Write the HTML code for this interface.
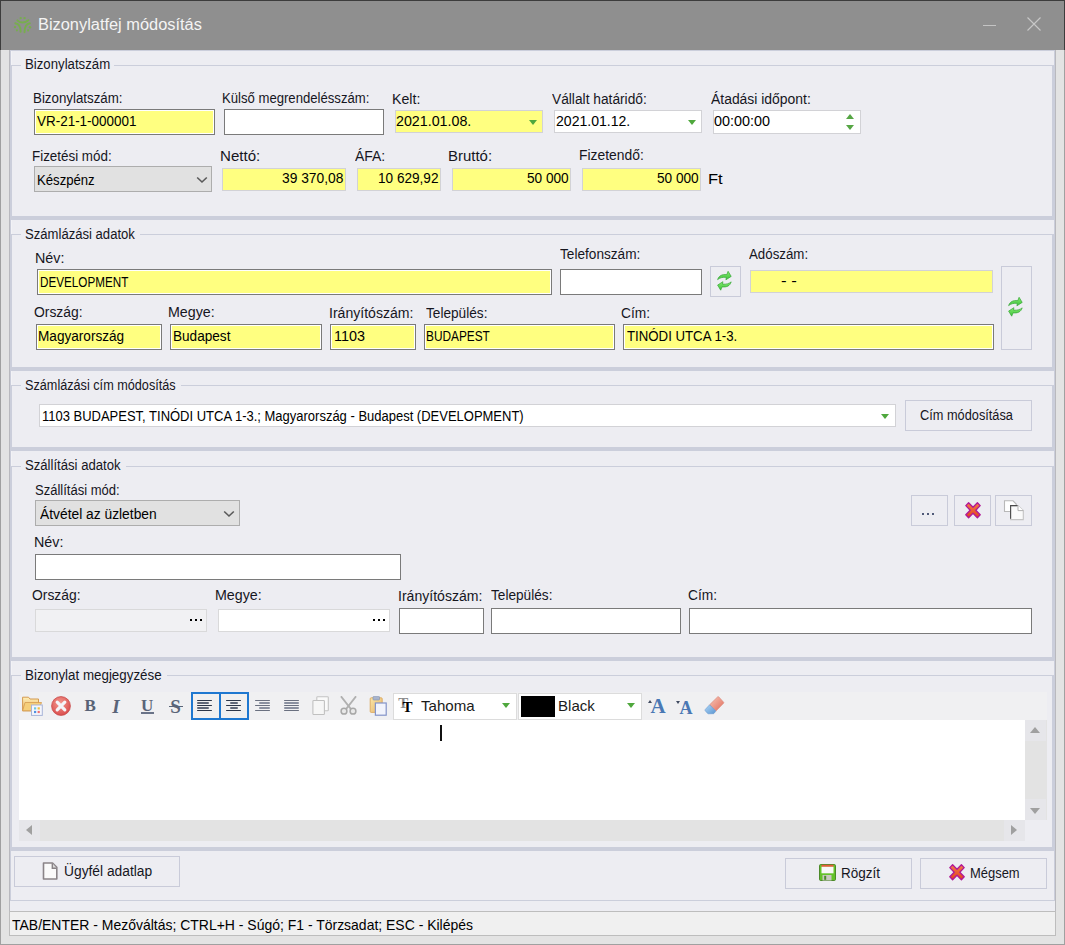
<!DOCTYPE html><html><head><meta charset="utf-8"><style>
html,body{margin:0;padding:0;}
body{width:1065px;height:945px;position:relative;overflow:hidden;background:#e3e3e3;font-family:"Liberation Sans",sans-serif;}
.t{position:absolute;white-space:nowrap;}
.b{position:absolute;box-sizing:border-box;}
</style></head><body>
<div class="b" style="left:0px;top:0px;width:1065px;height:945px;background:#e3e3e3;border:1px solid #a0a0a0;"></div>
<div class="b" style="left:0px;top:0px;width:1065px;height:50px;background:#8f8f8f;"></div>
<div class="b" style="left:0px;top:0px;width:1065px;height:1px;background:#3c3c3c;"></div>
<div class="b" style="left:0px;top:0px;width:1px;height:50px;background:#3c3c3c;"></div>
<div class="b" style="left:1064px;top:0px;width:1px;height:50px;background:#3c3c3c;"></div>
<svg class="b" style="left:10px;top:13px" width="26" height="24" viewBox="0 0 26 24">
<g fill="none" stroke="#78ad4f" stroke-width="2" stroke-linecap="round">
<path d="M7.4 7.4 Q12.7 11.8 18.3 7.2"/>
<path d="M5.3 10.2 Q10.8 11.2 10.6 18.8"/>
<path d="M19.8 10.2 Q14.4 11.2 14.5 19.3"/>
</g>
<g fill="#78ad4f"><circle cx="10.7" cy="5.1" r="1.2"/><circle cx="14.6" cy="5.1" r="1.2"/><circle cx="5" cy="14.1" r="1.2"/><circle cx="6.9" cy="17.3" r="1.1"/><circle cx="20" cy="14.2" r="1.2"/><circle cx="18.1" cy="17.4" r="1.1"/></g>
</svg>
<div class="t" style="left:38.48px;top:16.66px;font-size:16px;line-height:16px;transform:scaleX(1.0234);transform-origin:0 0;color:#f4f4f4;font-family:'Liberation Sans';font-weight:400;">Bizonylatfej módosítás</div>
<div class="b" style="left:983px;top:25px;width:13px;height:1px;background:#c4c4c4;"></div>
<svg class="b" style="left:1026px;top:16px" width="16" height="16" viewBox="0 0 16 16"><path d="M1.5 1.5 L14.5 14.5 M14.5 1.5 L1.5 14.5" stroke="#c8c8c8" stroke-width="1.1"/></svg>
<div class="b" style="left:9px;top:50px;width:1047px;height:862px;background:#b9b9be;"></div>
<div class="b" style="left:10px;top:50px;width:1045px;height:851px;background:#cbcedb;"></div>
<div class="b" style="left:11px;top:51px;width:1043px;height:14px;background:#ededf2;"></div>
<div class="b" style="left:11px;top:51px;width:1px;height:14px;background:#f2f2f6;"></div>
<div class="b" style="left:12px;top:65px;width:1040px;height:151px;background:#ededf2;"></div>
<div class="b" style="left:12px;top:65px;width:9px;height:1px;background:#cbcedb;"></div>
<div class="b" style="left:114px;top:65px;width:940px;height:1px;background:#cbcedb;"></div>
<div class="t" style="left:24.76px;top:57.45px;font-size:14px;line-height:14px;transform:scaleX(0.9432);transform-origin:0 0;color:#16161e;font-family:'Liberation Sans';font-weight:400;">Bizonylatszám</div>
<div class="b" style="left:11px;top:220px;width:1043px;height:14px;background:#ededf2;"></div>
<div class="b" style="left:11px;top:220px;width:1px;height:14px;background:#f2f2f6;"></div>
<div class="b" style="left:12px;top:234px;width:1040px;height:133px;background:#ededf2;"></div>
<div class="b" style="left:12px;top:234px;width:9px;height:1px;background:#cbcedb;"></div>
<div class="b" style="left:140px;top:234px;width:914px;height:1px;background:#cbcedb;"></div>
<div class="t" style="left:24.76px;top:226.75px;font-size:14px;line-height:14px;transform:scaleX(0.9353);transform-origin:0 0;color:#16161e;font-family:'Liberation Sans';font-weight:400;">Számlázási adatok</div>
<div class="b" style="left:11px;top:371px;width:1043px;height:14px;background:#ededf2;"></div>
<div class="b" style="left:11px;top:371px;width:1px;height:14px;background:#f2f2f6;"></div>
<div class="b" style="left:12px;top:385px;width:1040px;height:62px;background:#ededf2;"></div>
<div class="b" style="left:12px;top:385px;width:9px;height:1px;background:#cbcedb;"></div>
<div class="b" style="left:181px;top:385px;width:873px;height:1px;background:#cbcedb;"></div>
<div class="t" style="left:24.80px;top:378.15px;font-size:14px;line-height:14px;transform:scaleX(0.9048);transform-origin:0 0;color:#16161e;font-family:'Liberation Sans';font-weight:400;">Számlázási cím módosítás</div>
<div class="b" style="left:11px;top:451px;width:1043px;height:15px;background:#ededf2;"></div>
<div class="b" style="left:11px;top:451px;width:1px;height:15px;background:#f2f2f6;"></div>
<div class="b" style="left:12px;top:466px;width:1040px;height:191px;background:#ededf2;"></div>
<div class="b" style="left:12px;top:466px;width:9px;height:1px;background:#cbcedb;"></div>
<div class="b" style="left:126px;top:466px;width:928px;height:1px;background:#cbcedb;"></div>
<div class="t" style="left:24.76px;top:457.65px;font-size:14px;line-height:14px;transform:scaleX(0.9376);transform-origin:0 0;color:#16161e;font-family:'Liberation Sans';font-weight:400;">Szállítási adatok</div>
<div class="b" style="left:11px;top:661px;width:1043px;height:14px;background:#ededf2;"></div>
<div class="b" style="left:11px;top:661px;width:1px;height:14px;background:#f2f2f6;"></div>
<div class="b" style="left:12px;top:675px;width:1040px;height:172px;background:#ededf2;"></div>
<div class="b" style="left:12px;top:675px;width:9px;height:1px;background:#cbcedb;"></div>
<div class="b" style="left:167px;top:675px;width:887px;height:1px;background:#cbcedb;"></div>
<div class="t" style="left:24.75px;top:667.95px;font-size:14px;line-height:14px;transform:scaleX(0.9542);transform-origin:0 0;color:#16161e;font-family:'Liberation Sans';font-weight:400;">Bizonylat megjegyzése</div>
<div class="b" style="left:11px;top:851px;width:1043px;height:49px;background:#ededf2;"></div>
<div class="b" style="left:10px;top:900px;width:1045px;height:1px;background:#cbcedb;"></div>
<div class="b" style="left:10px;top:901px;width:1045px;height:10px;background:#ededf2;"></div>
<div class="b" style="left:9px;top:911px;width:1047px;height:25px;background:#f0f0f0;border:1px solid #bdbdbd;"></div>
<div class="t" style="left:12.00px;top:917.10px;font-size:15px;line-height:15px;transform:scaleX(0.9313);transform-origin:0 0;color:#000;font-family:'Liberation Sans';font-weight:400;">TAB/ENTER - Mezőváltás; CTRL+H - Súgó; F1 - Törzsadat; ESC - Kilépés</div>
<div class="t" style="left:32.55px;top:90.75px;font-size:14px;line-height:14px;transform:scaleX(0.9511);transform-origin:0 0;color:#16161e;font-family:'Liberation Sans';font-weight:400;">Bizonylatszám:</div>
<div class="t" style="left:222.06px;top:90.65px;font-size:14px;line-height:14px;transform:scaleX(0.9374);transform-origin:0 0;color:#16161e;font-family:'Liberation Sans';font-weight:400;">Külső megrendelésszám:</div>
<div class="t" style="left:392.39px;top:91.75px;font-size:14px;line-height:14px;transform:scaleX(1.0115);transform-origin:0 0;color:#16161e;font-family:'Liberation Sans';font-weight:400;">Kelt:</div>
<div class="t" style="left:552.10px;top:91.75px;font-size:14px;line-height:14px;transform:scaleX(0.9821);transform-origin:0 0;color:#16161e;font-family:'Liberation Sans';font-weight:400;">Vállalt határidő:</div>
<div class="t" style="left:710.80px;top:91.75px;font-size:14px;line-height:14px;transform:scaleX(0.9939);transform-origin:0 0;color:#16161e;font-family:'Liberation Sans';font-weight:400;">Átadási időpont:</div>
<div class="b" style="left:34px;top:109px;width:181px;height:26px;background:#ffff80;border:1px solid #7a7a7a;box-shadow:inset 0 0 0 1px #fff;"></div>
<div class="t" style="left:37.10px;top:114.25px;font-size:14px;line-height:14px;transform:scaleX(0.9612);transform-origin:0 0;color:#000;font-family:'Liberation Sans';font-weight:400;">VR-21-1-000001</div>
<div class="b" style="left:224px;top:109px;width:160px;height:26px;background:#fff;border:1px solid #7a7a7a;box-shadow:inset 0 0 0 1px #fff;"></div>
<div class="b" style="left:395px;top:110px;width:148px;height:23px;background:#ffff80;border:1px solid #d2d2d6;"></div>
<div class="t" style="left:396.48px;top:114.15px;font-size:14px;line-height:14px;transform:scaleX(1.0181);transform-origin:0 0;color:#000;font-family:'Liberation Sans';font-weight:400;">2021.01.08.</div>
<div class="b" style="left:528.5px;top:119.5px;width:0;height:0;border-left:4.5px solid transparent;border-right:4.5px solid transparent;border-top:5px solid #4fa83d;"></div>
<div class="b" style="left:554px;top:110px;width:148px;height:23px;background:#fff;border:1px solid #d2d2d6;"></div>
<div class="t" style="left:555.60px;top:114.15px;font-size:14px;line-height:14px;transform:scaleX(1.0042);transform-origin:0 0;color:#000;font-family:'Liberation Sans';font-weight:400;">2021.01.12.</div>
<div class="b" style="left:687.5px;top:119.5px;width:0;height:0;border-left:4.5px solid transparent;border-right:4.5px solid transparent;border-top:5px solid #4fa83d;"></div>
<div class="b" style="left:713px;top:110px;width:148px;height:24px;background:#fff;border:1px solid #d2d2d6;"></div>
<div class="t" style="left:713.57px;top:114.15px;font-size:14px;line-height:14px;transform:scaleX(1.0283);transform-origin:0 0;color:#000;font-family:'Liberation Sans';font-weight:400;">00:00:00</div>
<div class="b" style="left:846.1px;top:124.9px;width:0;height:0;border-left:4.55px solid transparent;border-right:4.55px solid transparent;border-top:5.1px solid #56a644;"></div>
<div class="b" style="left:846.1px;top:113.6px;width:0;height:0;border-left:4.55px solid transparent;border-right:4.55px solid transparent;border-bottom:5.2px solid #56a644;"></div>
<div class="t" style="left:32.44px;top:149.25px;font-size:14px;line-height:14px;transform:scaleX(0.9568);transform-origin:0 0;color:#16161e;font-family:'Liberation Sans';font-weight:400;">Fizetési mód:</div>
<div class="b" style="left:34px;top:166px;width:178px;height:26px;background:#e1e1e1;border:1px solid #adadad;"></div>
<div class="t" style="left:36.96px;top:172.55px;font-size:14px;line-height:14px;transform:scaleX(0.9383);transform-origin:0 0;color:#000;font-family:'Liberation Sans';font-weight:400;">Készpénz</div>
<svg class="b" style="left:195.5px;top:176px" width="12" height="8" viewBox="0 0 12 8"><path d="M1.2 1.5 L6 6 L10.8 1.5" fill="none" stroke="#5a5a5a" stroke-width="1.6"/></svg>
<div class="t" style="left:219.52px;top:149.35px;font-size:14px;line-height:14px;transform:scaleX(1.0771);transform-origin:0 0;color:#16161e;font-family:'Liberation Sans';font-weight:400;">Nettó:</div>
<div class="t" style="left:354.70px;top:149.35px;font-size:14px;line-height:14px;transform:scaleX(0.9966);transform-origin:0 0;color:#16161e;font-family:'Liberation Sans';font-weight:400;">ÁFA:</div>
<div class="t" style="left:448.43px;top:149.35px;font-size:14px;line-height:14px;transform:scaleX(1.0692);transform-origin:0 0;color:#16161e;font-family:'Liberation Sans';font-weight:400;">Bruttó:</div>
<div class="t" style="left:578.81px;top:147.95px;font-size:14px;line-height:14px;transform:scaleX(0.9905);transform-origin:0 0;color:#16161e;font-family:'Liberation Sans';font-weight:400;">Fizetendő:</div>
<div class="b" style="left:222px;top:168px;width:124px;height:23px;background:#ffff80;border:1px solid #d2d2d6;"></div>
<div class="t" style="left:281.91px;top:171.35px;font-size:14px;line-height:14px;transform:scaleX(0.9852);transform-origin:0 0;color:#000;font-family:'Liberation Sans';font-weight:400;">39 370,08</div>
<div class="b" style="left:357px;top:168px;width:84px;height:23px;background:#ffff80;border:1px solid #d2d2d6;"></div>
<div class="t" style="left:377.63px;top:171.35px;font-size:14px;line-height:14px;transform:scaleX(0.9705);transform-origin:0 0;color:#000;font-family:'Liberation Sans';font-weight:400;">10 629,92</div>
<div class="b" style="left:452px;top:168px;width:119px;height:23px;background:#ffff80;border:1px solid #d2d2d6;"></div>
<div class="t" style="left:527.13px;top:171.35px;font-size:14px;line-height:14px;transform:scaleX(0.9732);transform-origin:0 0;color:#000;font-family:'Liberation Sans';font-weight:400;">50 000</div>
<div class="b" style="left:582px;top:168px;width:119px;height:23px;background:#ffff80;border:1px solid #d2d2d6;"></div>
<div class="t" style="left:656.73px;top:171.35px;font-size:14px;line-height:14px;transform:scaleX(0.9732);transform-origin:0 0;color:#000;font-family:'Liberation Sans';font-weight:400;">50 000</div>
<div class="t" style="left:707.82px;top:171.75px;font-size:14px;line-height:14px;transform:scaleX(1.1818);transform-origin:0 0;color:#000;font-family:'Liberation Sans';font-weight:400;">Ft</div>
<div class="t" style="left:35.48px;top:250.65px;font-size:14px;line-height:14px;transform:scaleX(1.0222);transform-origin:0 0;color:#16161e;font-family:'Liberation Sans';font-weight:400;">Név:</div>
<div class="t" style="left:560.00px;top:246.75px;font-size:14px;line-height:14px;transform:scaleX(0.9741);transform-origin:0 0;color:#16161e;font-family:'Liberation Sans';font-weight:400;">Telefonszám:</div>
<div class="t" style="left:748.70px;top:246.95px;font-size:14px;line-height:14px;transform:scaleX(0.9492);transform-origin:0 0;color:#16161e;font-family:'Liberation Sans';font-weight:400;">Adószám:</div>
<div class="b" style="left:37px;top:269px;width:515px;height:26px;background:#ffff80;border:1px solid #7a7a7a;box-shadow:inset 0 0 0 1px #fff;"></div>
<div class="t" style="left:39.97px;top:274.65px;font-size:14px;line-height:14px;transform:scaleX(0.8343);transform-origin:0 0;color:#000;font-family:'Liberation Sans';font-weight:400;">DEVELOPMENT</div>
<div class="b" style="left:560px;top:269px;width:142px;height:26px;background:#fff;border:1px solid #7a7a7a;box-shadow:inset 0 0 0 1px #fff;"></div>
<div class="b" style="left:710px;top:266px;width:31px;height:31px;background:#ededf2;border:1px solid #c9cbd9;"></div>
<svg class="b" style="left:712.0px;top:268.0px" width="26" height="26" viewBox="0 0 26 26">
<defs><linearGradient id="rg" x1="0" y1="0" x2="0" y2="1"><stop offset="0" stop-color="#86ec6e"/><stop offset="1" stop-color="#3cc23c"/></linearGradient></defs>
<path d="M5.6 11.6 C7 7.5 10 6.2 14.8 6.6 L16.1 3.3 L19.2 8.4 L13.9 11.8 L14.3 9.4 C10.5 9 8 9.8 5.6 11.6 Z" fill="url(#rg)" stroke="#35a535" stroke-width="0.7" stroke-linejoin="round"/>
<path d="M19.2 13.9 C17.8 18 14.8 19.3 10 18.9 L8.7 22.2 L5.6 17.1 L10.9 13.7 L10.5 16.1 C14.3 16.5 16.8 15.7 19.2 13.9 Z" fill="url(#rg)" stroke="#35a535" stroke-width="0.7" stroke-linejoin="round"/>
</svg>
<div class="b" style="left:750px;top:270px;width:243px;height:23px;background:#ffff80;border:1px solid #d2d2d6;"></div>
<div class="t" style="left:781.21px;top:274.15px;font-size:14px;line-height:14px;transform:scaleX(1.1917);transform-origin:0 0;color:#000;font-family:'Liberation Sans';font-weight:400;">- -</div>
<div class="b" style="left:1001px;top:266px;width:31px;height:84px;background:#ededf2;border:1px solid #c9cbd9;"></div>
<svg class="b" style="left:1003.4px;top:294.4px" width="26" height="26" viewBox="0 0 26 26">
<defs><linearGradient id="rg" x1="0" y1="0" x2="0" y2="1"><stop offset="0" stop-color="#86ec6e"/><stop offset="1" stop-color="#3cc23c"/></linearGradient></defs>
<path d="M5.6 11.6 C7 7.5 10 6.2 14.8 6.6 L16.1 3.3 L19.2 8.4 L13.9 11.8 L14.3 9.4 C10.5 9 8 9.8 5.6 11.6 Z" fill="url(#rg)" stroke="#35a535" stroke-width="0.7" stroke-linejoin="round"/>
<path d="M19.2 13.9 C17.8 18 14.8 19.3 10 18.9 L8.7 22.2 L5.6 17.1 L10.9 13.7 L10.5 16.1 C14.3 16.5 16.8 15.7 19.2 13.9 Z" fill="url(#rg)" stroke="#35a535" stroke-width="0.7" stroke-linejoin="round"/>
</svg>
<div class="t" style="left:34.01px;top:304.65px;font-size:14px;line-height:14px;transform:scaleX(0.9915);transform-origin:0 0;color:#16161e;font-family:'Liberation Sans';font-weight:400;">Ország:</div>
<div class="t" style="left:168.18px;top:304.65px;font-size:14px;line-height:14px;transform:scaleX(1.0182);transform-origin:0 0;color:#16161e;font-family:'Liberation Sans';font-weight:400;">Megye:</div>
<div class="t" style="left:328.60px;top:305.65px;font-size:14px;line-height:14px;transform:scaleX(1.0049);transform-origin:0 0;color:#16161e;font-family:'Liberation Sans';font-weight:400;">Irányítószám:</div>
<div class="t" style="left:426.30px;top:305.65px;font-size:14px;line-height:14px;transform:scaleX(0.9742);transform-origin:0 0;color:#16161e;font-family:'Liberation Sans';font-weight:400;">Település:</div>
<div class="t" style="left:620.72px;top:305.65px;font-size:14px;line-height:14px;transform:scaleX(0.9815);transform-origin:0 0;color:#16161e;font-family:'Liberation Sans';font-weight:400;">Cím:</div>
<div class="b" style="left:36px;top:324px;width:126px;height:26px;background:#ffff80;border:1px solid #7a7a7a;box-shadow:inset 0 0 0 1px #fff;"></div>
<div class="t" style="left:38.43px;top:328.95px;font-size:14px;line-height:14px;transform:scaleX(0.9713);transform-origin:0 0;color:#000;font-family:'Liberation Sans';font-weight:400;">Magyarország</div>
<div class="b" style="left:170px;top:324px;width:152px;height:26px;background:#ffff80;border:1px solid #7a7a7a;box-shadow:inset 0 0 0 1px #fff;"></div>
<div class="t" style="left:172.53px;top:328.95px;font-size:14px;line-height:14px;transform:scaleX(0.9707);transform-origin:0 0;color:#000;font-family:'Liberation Sans';font-weight:400;">Budapest</div>
<div class="b" style="left:330px;top:324px;width:86px;height:26px;background:#ffff80;border:1px solid #7a7a7a;box-shadow:inset 0 0 0 1px #fff;"></div>
<div class="t" style="left:333.78px;top:328.95px;font-size:14px;line-height:14px;transform:scaleX(1.0250);transform-origin:0 0;color:#000;font-family:'Liberation Sans';font-weight:400;">1103</div>
<div class="b" style="left:424px;top:324px;width:191px;height:26px;background:#ffff80;border:1px solid #7a7a7a;box-shadow:inset 0 0 0 1px #fff;"></div>
<div class="t" style="left:426.45px;top:328.95px;font-size:14px;line-height:14px;transform:scaleX(0.8459);transform-origin:0 0;color:#000;font-family:'Liberation Sans';font-weight:400;">BUDAPEST</div>
<div class="b" style="left:623px;top:324px;width:371px;height:26px;background:#ffff80;border:1px solid #7a7a7a;box-shadow:inset 0 0 0 1px #fff;"></div>
<div class="t" style="left:626.60px;top:328.95px;font-size:14px;line-height:14px;transform:scaleX(0.9443);transform-origin:0 0;color:#000;font-family:'Liberation Sans';font-weight:400;">TINÓDI UTCA 1-3.</div>
<div class="b" style="left:39px;top:404px;width:857px;height:23px;background:#fff;border:1px solid #d2d2d6;"></div>
<div class="t" style="left:41.77px;top:408.55px;font-size:14px;line-height:14px;transform:scaleX(0.9277);transform-origin:0 0;color:#000;font-family:'Liberation Sans';font-weight:400;">1103 BUDAPEST, TINÓDI UTCA 1-3.; Magyarország - Budapest (DEVELOPMENT)</div>
<div class="b" style="left:881.0px;top:413.5px;width:0;height:0;border-left:4.5px solid transparent;border-right:4.5px solid transparent;border-top:5px solid #4fa83d;"></div>
<div class="b" style="left:905px;top:400px;width:127px;height:31px;background:#ededf2;border:1px solid #c9cbd9;"></div>
<div class="t" style="left:919.79px;top:407.85px;font-size:14px;line-height:14px;transform:scaleX(0.9119);transform-origin:0 0;color:#16161e;font-family:'Liberation Sans';font-weight:400;">Cím módosítása</div>
<div class="t" style="left:34.87px;top:482.65px;font-size:14px;line-height:14px;transform:scaleX(0.9303);transform-origin:0 0;color:#16161e;font-family:'Liberation Sans';font-weight:400;">Szállítási mód:</div>
<div class="b" style="left:35px;top:500px;width:205px;height:26px;background:#e1e1e1;border:1px solid #adadad;"></div>
<div class="t" style="left:39.70px;top:506.95px;font-size:14px;line-height:14px;transform:scaleX(0.9863);transform-origin:0 0;color:#000;font-family:'Liberation Sans';font-weight:400;">Átvétel az üzletben</div>
<svg class="b" style="left:222.5px;top:510px" width="12" height="8" viewBox="0 0 12 8"><path d="M1.2 1.5 L6 6 L10.8 1.5" fill="none" stroke="#5a5a5a" stroke-width="1.6"/></svg>
<div class="t" style="left:33.88px;top:535.45px;font-size:14px;line-height:14px;transform:scaleX(1.0222);transform-origin:0 0;color:#16161e;font-family:'Liberation Sans';font-weight:400;">Név:</div>
<div class="b" style="left:35px;top:554px;width:366px;height:26px;background:#fff;border:1px solid #7a7a7a;box-shadow:inset 0 0 0 1px #fff;"></div>
<div class="b" style="left:911px;top:495px;width:37px;height:31px;background:#ededf2;border:1px solid #c9cbd9;"></div>
<div class="b" style="left:922px;top:513px;width:2px;height:2px;background:#505a78;"></div>
<div class="b" style="left:927px;top:513px;width:2px;height:2px;background:#505a78;"></div>
<div class="b" style="left:932px;top:513px;width:2px;height:2px;background:#505a78;"></div>
<div class="b" style="left:954px;top:495px;width:37px;height:31px;background:#ededf2;border:1px solid #c9cbd9;"></div>
<svg class="b" style="left:965.0px;top:502.3px" width="16" height="17" viewBox="0 0 16 17">
<defs><linearGradient id="xg" x1="0" y1="0" x2="0" y2="1"><stop offset="0" stop-color="#f47a4a"/><stop offset="1" stop-color="#e2441c"/></linearGradient></defs>
<path d="M0.8 3.6 L3.6 0.8 L8 5.2 L12.4 0.8 L15.2 3.6 L10.8 8.2 L15.2 12.8 L12.4 15.8 L8 11.3 L3.6 15.8 L0.8 12.8 L5.2 8.2 Z" fill="url(#xg)" stroke="#b01898" stroke-width="1.3" stroke-linejoin="round"/>
</svg>
<div class="b" style="left:995px;top:495px;width:37px;height:31px;background:#ededf2;border:1px solid #c9cbd9;"></div>
<svg class="b" style="left:1000px;top:497px" width="28" height="28" viewBox="0 0 28 28">
<path d="M4.5 3.8 H13 L16.2 7 V14.5 H4.5 Z" fill="#fff" stroke="#b8b8b8" stroke-width="1.1"/>
<path d="M10.6 8.6 H18 L23.3 13.6 V22.6 H10.6 Z" fill="#fafafa" stroke="#c4c4c4" stroke-width="1.1"/>
<path d="M10.6 21.8 V8.6 H17.6" fill="none" stroke="#4a4a4a" stroke-width="1.1"/>
<path d="M18 8.6 V13.6 H23.3" fill="#fff" stroke="#b0b0b0" stroke-width="1"/>
</svg>
<div class="t" style="left:32.41px;top:588.35px;font-size:14px;line-height:14px;transform:scaleX(0.9915);transform-origin:0 0;color:#16161e;font-family:'Liberation Sans';font-weight:400;">Ország:</div>
<div class="t" style="left:214.98px;top:588.15px;font-size:14px;line-height:14px;transform:scaleX(1.0182);transform-origin:0 0;color:#16161e;font-family:'Liberation Sans';font-weight:400;">Megye:</div>
<div class="t" style="left:398.40px;top:588.75px;font-size:14px;line-height:14px;transform:scaleX(1.0049);transform-origin:0 0;color:#16161e;font-family:'Liberation Sans';font-weight:400;">Irányítószám:</div>
<div class="t" style="left:491.00px;top:588.15px;font-size:14px;line-height:14px;transform:scaleX(0.9742);transform-origin:0 0;color:#16161e;font-family:'Liberation Sans';font-weight:400;">Település:</div>
<div class="t" style="left:687.72px;top:588.15px;font-size:14px;line-height:14px;transform:scaleX(0.9815);transform-origin:0 0;color:#16161e;font-family:'Liberation Sans';font-weight:400;">Cím:</div>
<div class="b" style="left:35px;top:609px;width:172px;height:23px;background:#f1f1f3;border:1px solid #d9d9da;"></div>
<div class="b" style="left:190px;top:619px;width:2px;height:2px;background:#000;"></div>
<div class="b" style="left:195px;top:619px;width:2px;height:2px;background:#000;"></div>
<div class="b" style="left:200px;top:619px;width:2px;height:2px;background:#000;"></div>
<div class="b" style="left:218px;top:609px;width:172px;height:23px;background:#fff;border:1px solid #d9d9da;"></div>
<div class="b" style="left:373px;top:619px;width:2px;height:2px;background:#000;"></div>
<div class="b" style="left:378px;top:619px;width:2px;height:2px;background:#000;"></div>
<div class="b" style="left:383px;top:619px;width:2px;height:2px;background:#000;"></div>
<div class="b" style="left:399px;top:608px;width:85px;height:26px;background:#fff;border:1px solid #7a7a7a;box-shadow:inset 0 0 0 1px #fff;"></div>
<div class="b" style="left:491px;top:608px;width:190px;height:26px;background:#fff;border:1px solid #7a7a7a;box-shadow:inset 0 0 0 1px #fff;"></div>
<div class="b" style="left:689px;top:608px;width:343px;height:26px;background:#fff;border:1px solid #7a7a7a;box-shadow:inset 0 0 0 1px #fff;"></div>
<div class="b" style="left:19px;top:692px;width:1028px;height:28px;background:#f0f0f2;"></div>
<div class="b" style="left:19px;top:720px;width:1006px;height:100px;background:#fff;"></div>
<div class="b" style="left:1025px;top:720px;width:22px;height:100px;background:#e3e3e3;"></div>
<div class="b" style="left:19px;top:820px;width:1006px;height:21px;background:#e3e3e3;"></div>
<div class="b" style="left:1025px;top:820px;width:22px;height:21px;background:#ededf2;"></div>
<div class="b" style="left:1025px;top:720px;width:21px;height:21px;background:#e6e6ea;"></div>
<div class="b" style="left:1025px;top:799px;width:21px;height:21px;background:#e6e6ea;"></div>
<div class="b" style="left:19px;top:820px;width:21px;height:21px;background:#e6e6ea;"></div>
<div class="b" style="left:1004px;top:820px;width:21px;height:21px;background:#e6e6ea;"></div>
<div class="b" style="left:1030px;top:726.5px;width:0;height:0;border-left:5.5px solid transparent;border-right:5.5px solid transparent;border-bottom:6px solid #a0a0a0;"></div>
<div class="b" style="left:1030px;top:807.5px;width:0;height:0;border-left:5.5px solid transparent;border-right:5.5px solid transparent;border-top:6px solid #a0a0a0;"></div>
<div class="b" style="left:25.5px;top:825px;width:0;height:0;border-top:5.5px solid transparent;border-bottom:5.5px solid transparent;border-right:6px solid #a0a0a0;"></div>
<div class="b" style="left:1011px;top:825px;width:0;height:0;border-top:5.5px solid transparent;border-bottom:5.5px solid transparent;border-left:6px solid #a0a0a0;"></div>
<div class="b" style="left:440px;top:725px;width:2px;height:16px;background:#111;"></div>
<svg class="b" style="left:22px;top:696px" width="21" height="20" viewBox="0 0 21 20">
<defs><linearGradient id="fg" x1="0" y1="0" x2="0" y2="1"><stop offset="0" stop-color="#fff0b8"/><stop offset="1" stop-color="#e8b060"/></linearGradient></defs>
<path d="M0.6 1.2 H6.5 L8 3 H16.5 V14.8 H0.6 Z" fill="url(#fg)" stroke="#d49a50" stroke-width="1"/>
<path d="M0.6 14.8 L3 6.5 H19.5 L16.5 14.8 Z" fill="#f6cf7a" stroke="#d49a50" stroke-width="0.8"/>
<rect x="9.5" y="9" width="10.8" height="10.4" fill="#f4f6fc" stroke="#a8b4d8" stroke-width="1"/>
<rect x="12" y="11.3" width="2.2" height="2.2" fill="#6cc8e0"/><rect x="15.6" y="11.3" width="2.2" height="2.2" fill="#f0c040"/>
<rect x="12" y="14.9" width="2.2" height="2.2" fill="#5090e0"/><rect x="15.6" y="14.9" width="2.2" height="2.2" fill="#f07070"/>
</svg>
<svg class="b" style="left:51px;top:696px" width="20" height="20" viewBox="0 0 20 20">
<defs><radialGradient id="cg" cx="0.45" cy="0.35" r="0.7"><stop offset="0" stop-color="#f49a90"/><stop offset="1" stop-color="#d84848"/></radialGradient></defs>
<circle cx="10" cy="10" r="9.4" fill="url(#cg)" stroke="#c84a4a" stroke-width="0.8"/>
<path d="M6.2 6.2 L13.8 13.8 M13.8 6.2 L6.2 13.8" stroke="#f4f4f8" stroke-width="3.2" stroke-linecap="round"/>
</svg>
<div class="t" style="left:84.5px;top:697px;font:bold 17px/17px 'Liberation Serif',serif;color:#586276;">B</div>
<div class="t" style="left:112.3px;top:696.9px;font:bold italic 19px/19px 'Liberation Serif',serif;color:#5a6478;">I</div>
<div class="t" style="left:141px;top:696.5px;font:bold 17px/17px 'Liberation Serif',serif;color:#5a6478;">U</div>
<div class="b" style="left:141px;top:712px;width:13px;height:2px;background:#6a7388;"></div>
<div class="t" style="left:170.3px;top:696.9px;font:bold 19px/19px 'Liberation Serif',serif;color:#5a6478;">S</div>
<div class="b" style="left:168.5px;top:705.5px;width:14.0px;height:1.5px;background:#5a6478;"></div>
<div class="b" style="left:191px;top:692px;width:30px;height:28px;background:#f0f0f0;border:1px solid #1e78d0;border-width:2px;"></div>
<div class="b" style="left:219px;top:692px;width:30px;height:28px;background:#f0f0f0;border:1px solid #1e78d0;border-width:2px;"></div>
<div class="b" style="left:197.3px;top:699.6px;width:15.199999999999989px;height:1.6999999999999318px;background:#2c3648;border-radius:1px;"></div>
<div class="b" style="left:197.3px;top:702.2px;width:11.5px;height:1.6999999999999318px;background:#606878;border-radius:1px;"></div>
<div class="b" style="left:197.3px;top:704.7px;width:15.199999999999989px;height:1.6999999999999318px;background:#2c3648;border-radius:1px;"></div>
<div class="b" style="left:197.3px;top:707.3000000000001px;width:11.5px;height:1.6999999999999318px;background:#606878;border-radius:1px;"></div>
<div class="b" style="left:197.3px;top:709.7px;width:15.199999999999989px;height:1.6999999999999318px;background:#2c3648;border-radius:1px;"></div>
<div class="b" style="left:226px;top:699.6px;width:15.199999999999989px;height:1.6999999999999318px;background:#2c3648;border-radius:1px;"></div>
<div class="b" style="left:230px;top:702.2px;width:7.599999999999994px;height:1.6999999999999318px;background:#606878;border-radius:1px;"></div>
<div class="b" style="left:226px;top:704.7px;width:15.199999999999989px;height:1.6999999999999318px;background:#2c3648;border-radius:1px;"></div>
<div class="b" style="left:230px;top:707.3000000000001px;width:7.599999999999994px;height:1.6999999999999318px;background:#606878;border-radius:1px;"></div>
<div class="b" style="left:226px;top:709.7px;width:15.199999999999989px;height:1.6999999999999318px;background:#2c3648;border-radius:1px;"></div>
<div class="b" style="left:255px;top:699.6px;width:15px;height:1.6999999999999318px;background:#6a7080;border-radius:1px;"></div>
<div class="b" style="left:259px;top:702.2px;width:11px;height:1.6999999999999318px;background:#8a90a0;border-radius:1px;"></div>
<div class="b" style="left:255px;top:704.7px;width:15px;height:1.6999999999999318px;background:#6a7080;border-radius:1px;"></div>
<div class="b" style="left:259px;top:707.3000000000001px;width:11px;height:1.6999999999999318px;background:#8a90a0;border-radius:1px;"></div>
<div class="b" style="left:255px;top:709.7px;width:15px;height:1.6999999999999318px;background:#6a7080;border-radius:1px;"></div>
<div class="b" style="left:283.8px;top:699.6px;width:15.199999999999989px;height:1.6999999999999318px;background:#6a7080;border-radius:1px;"></div>
<div class="b" style="left:283.8px;top:702.2px;width:15.199999999999989px;height:1.6999999999999318px;background:#8a90a0;border-radius:1px;"></div>
<div class="b" style="left:283.8px;top:704.7px;width:15.199999999999989px;height:1.6999999999999318px;background:#6a7080;border-radius:1px;"></div>
<div class="b" style="left:283.8px;top:707.3000000000001px;width:15.199999999999989px;height:1.6999999999999318px;background:#8a90a0;border-radius:1px;"></div>
<div class="b" style="left:283.8px;top:709.7px;width:15.199999999999989px;height:1.6999999999999318px;background:#6a7080;border-radius:1px;"></div>
<svg class="b" style="left:312px;top:696px" width="18" height="19" viewBox="0 0 18 19">
<rect x="4.8" y="0.8" width="11.5" height="14" fill="#fafafa" stroke="#c4c4c4" stroke-width="1.1" rx="0.8"/>
<rect x="0.9" y="4.5" width="11.5" height="14" fill="#f6f6f6" stroke="#c0c0c0" stroke-width="1.1" rx="0.8"/>
</svg>
<svg class="b" style="left:339px;top:696px" width="19" height="19" viewBox="0 0 19 19">
<path d="M2.5 1 L11.5 12.5 M16.5 1 L7.5 12.5" stroke="#b0b0b0" stroke-width="2" stroke-linecap="round"/>
<circle cx="5" cy="15.2" r="2.9" fill="#e8e8e8" stroke="#a8a8a8" stroke-width="1.5"/>
<circle cx="14" cy="15.2" r="2.9" fill="#e8e8e8" stroke="#a8a8a8" stroke-width="1.5"/>
</svg>
<svg class="b" style="left:369px;top:696px" width="18" height="20" viewBox="0 0 18 20">
<defs><linearGradient id="pg" x1="0" y1="0" x2="1" y2="1"><stop offset="0" stop-color="#fae6a8"/><stop offset="1" stop-color="#e8b468"/></linearGradient></defs>
<rect x="1.2" y="1.8" width="12" height="14.6" rx="1" fill="url(#pg)" stroke="#dca860" stroke-width="0.9"/>
<rect x="4" y="0.4" width="6.5" height="3.6" rx="0.8" fill="#a8b4cc" stroke="#8090b0" stroke-width="0.6"/>
<rect x="6.4" y="7" width="10.8" height="12.2" fill="#f2f4fc" stroke="#8494c8" stroke-width="1.2"/>
</svg>
<div class="b" style="left:393px;top:693px;width:124px;height:27px;background:#fff;border:1px solid #dcdcdc;"></div>
<div class="t" style="left:398.3px;top:696.1px;font:bold 15px/15px 'Liberation Serif',serif;color:#8c8c8c;">T</div>
<div class="t" style="left:402.6px;top:699.6px;font:bold 15px/15px 'Liberation Serif',serif;color:#000;">T</div>
<div class="t" style="left:421.30px;top:698.10px;font-size:15px;line-height:15px;transform:scaleX(1.0057);transform-origin:0 0;color:#1b1b1b;font-family:'Liberation Sans';font-weight:400;">Tahoma</div>
<div class="b" style="left:502.2px;top:703.2px;width:0;height:0;border-left:4.5px solid transparent;border-right:4.5px solid transparent;border-top:5px solid #4fa83d;"></div>
<div class="b" style="left:518px;top:693px;width:124px;height:27px;background:#fff;border:1px solid #dcdcdc;"></div>
<div class="b" style="left:521px;top:696px;width:34px;height:21px;background:#000;"></div>
<div class="t" style="left:558.10px;top:698.10px;font-size:15px;line-height:15px;transform:scaleX(1.0029);transform-origin:0 0;color:#1b1b1b;font-family:'Liberation Sans';font-weight:400;">Black</div>
<div class="b" style="left:626.9px;top:703.3px;width:0;height:0;border-left:4.5px solid transparent;border-right:4.5px solid transparent;border-top:5px solid #4fa83d;"></div>
<div class="b" style="left:647.5px;top:699.5px;width:0;height:0;border-left:2.7px solid transparent;border-right:2.7px solid transparent;border-bottom:3.2px solid #404a60;"></div>
<div class="t" style="left:650.6px;top:696.1px;font:bold 21px/21px 'Liberation Serif',serif;color:#4a78b4;">A</div>
<div class="b" style="left:676px;top:701px;width:0;height:0;border-left:2.8px solid transparent;border-right:2.8px solid transparent;border-top:3.6px solid #404a60;"></div>
<div class="t" style="left:679.4px;top:698.6px;font:bold 18px/18px 'Liberation Serif',serif;color:#4a78b4;">A</div>
<svg class="b" style="left:700px;top:692px" width="28" height="28" viewBox="0 0 28 28">
<defs><linearGradient id="eg" x1="0" y1="0" x2="1" y2="1"><stop offset="0" stop-color="#f8c8b8"/><stop offset="1" stop-color="#e06a5a"/></linearGradient>
<linearGradient id="bg2" x1="0" y1="0" x2="1" y2="1"><stop offset="0" stop-color="#b0d8f8"/><stop offset="1" stop-color="#5a94d0"/></linearGradient></defs>
<path d="M9.6 12.8 L17.6 4.9 Q18.2 4.4 18.8 4.9 L23.6 10.2 Q24 10.8 23.5 11.3 L15.9 19.1 Z" fill="url(#eg)" stroke="#d88070" stroke-width="0.6"/>
<path d="M9.6 12.8 L15.9 19.1 L14.2 21.2 Q13.8 21.7 13 21.7 L8.6 21.8 Q8 21.8 7.6 21.4 L5.2 18.7 Q4.8 18.1 5.3 17.4 Z" fill="url(#bg2)" stroke="#6a9ad0" stroke-width="0.6"/>
</svg>
<div class="b" style="left:14px;top:856px;width:166px;height:31px;background:#ededf2;border:1px solid #c9cbd9;"></div>
<svg class="b" style="left:42px;top:862.3px" width="16" height="18" viewBox="0 0 16 18">
<path d="M1.5 1 H10.5 L14.8 5.3 V17 H1.5 Z" fill="#fafafa" stroke="#8a8488" stroke-width="1.6" stroke-linejoin="round"/>
<path d="M10.3 1.2 V6.2 H14.6" fill="#d8d8d8" stroke="#8a8488" stroke-width="1.4"/>
</svg>
<div class="t" style="left:63.61px;top:864.15px;font-size:14px;line-height:14px;transform:scaleX(0.9852);transform-origin:0 0;color:#16161e;font-family:'Liberation Sans';font-weight:400;">Ügyfél adatlap</div>
<div class="b" style="left:785px;top:858px;width:127px;height:31px;background:#ededf2;border:1px solid #c9cbd9;"></div>
<svg class="b" style="left:819px;top:863.5px" width="17" height="17" viewBox="0 0 17 17">
<rect x="0.5" y="0.5" width="16" height="16" rx="1.2" fill="#64c22a" stroke="#4c8a2a" stroke-width="1"/>
<rect x="2.5" y="0.8" width="12" height="2" fill="#e85a3a"/>
<rect x="2.5" y="2.8" width="12" height="6.5" fill="#f8f8f8"/>
<rect x="3.5" y="11" width="9" height="5.5" fill="#c8c8c0"/>
<rect x="5.2" y="11.8" width="2" height="4" fill="#4a8a2a"/>
</svg>
<div class="t" style="left:841.14px;top:866.15px;font-size:14px;line-height:14px;transform:scaleX(0.9641);transform-origin:0 0;color:#16161e;font-family:'Liberation Sans';font-weight:400;">Rögzít</div>
<div class="b" style="left:920px;top:858px;width:127px;height:31px;background:#ededf2;border:1px solid #c9cbd9;"></div>
<svg class="b" style="left:948.7px;top:863.8px" width="16" height="17" viewBox="0 0 16 17">
<defs><linearGradient id="xg" x1="0" y1="0" x2="0" y2="1"><stop offset="0" stop-color="#f47a4a"/><stop offset="1" stop-color="#e2441c"/></linearGradient></defs>
<path d="M0.8 3.6 L3.6 0.8 L8 5.2 L12.4 0.8 L15.2 3.6 L10.8 8.2 L15.2 12.8 L12.4 15.8 L8 11.3 L3.6 15.8 L0.8 12.8 L5.2 8.2 Z" fill="url(#xg)" stroke="#b01898" stroke-width="1.3" stroke-linejoin="round"/>
</svg>
<div class="t" style="left:969.68px;top:866.15px;font-size:14px;line-height:14px;transform:scaleX(0.9250);transform-origin:0 0;color:#16161e;font-family:'Liberation Sans';font-weight:400;">Mégsem</div>
</body></html>
